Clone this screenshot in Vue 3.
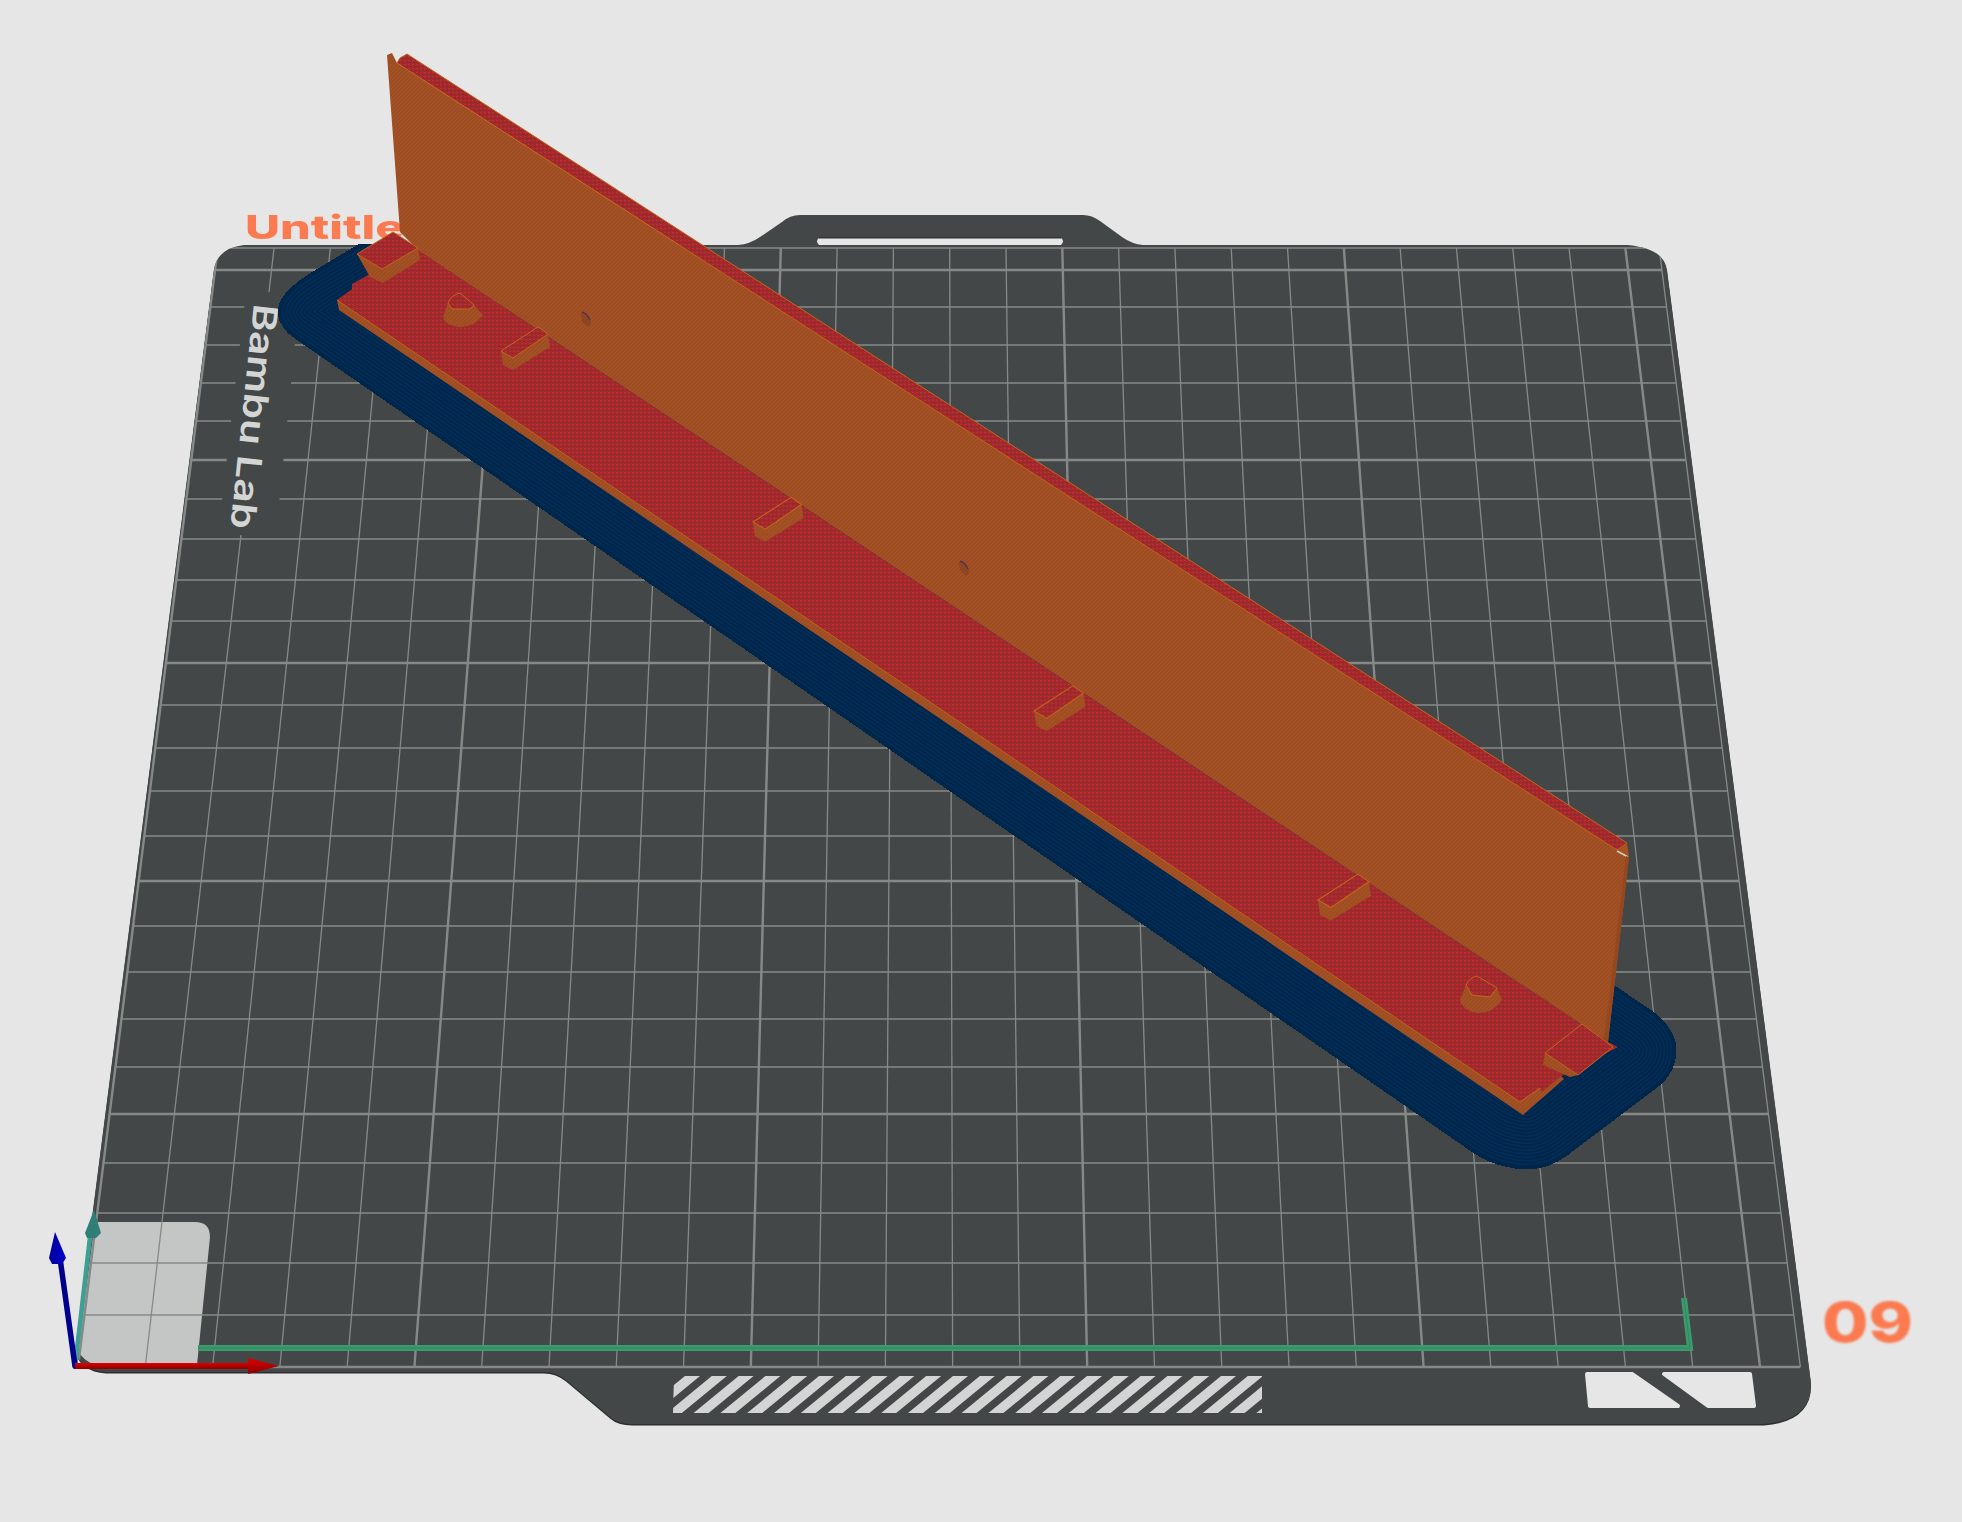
<template>
  <div class="viewport">
    <svg class="scene" width="1962" height="1522" viewBox="0 0 1962 1522">
      <defs>
        <pattern id="wallHatch" width="4" height="4" patternUnits="userSpaceOnUse">
          <rect width="4" height="4" fill="#a04e23" />
          <path d="M0 4L4 0" stroke="#a8531f" stroke-width="1" />
          <path d="M0 2L2 0M2 4L4 2" stroke="#944927" stroke-width=".6" />
        </pattern>
        <pattern id="redHatch" width="4" height="4" patternUnits="userSpaceOnUse">
          <rect width="4" height="4" fill="#a3292d" />
          <rect width="2" height="1" fill="#c22e2e" />
          <rect x="2" y="2" width="2" height="1" fill="#882b2d" />
        </pattern>
        <linearGradient id="redShaft" x1="0" y1="0" x2="0" y2="1">
          <stop offset="0" stop-color="#e00000" />
          <stop offset="1" stop-color="#8a0000" />
        </linearGradient>
        <linearGradient id="blueHead" x1="0" y1="0" x2="1" y2="0">
          <stop offset="0" stop-color="#00009c" />
          <stop offset="1" stop-color="#0000cc" />
        </linearGradient>
        <clipPath id="plateClip"><path :d="platePath" /></clipPath>
        <clipPath id="brimClip"><path :d="brimPath" /></clipPath>
        <clipPath id="stripeClip"><path d="M674 1376H1262V1413H673Z" /></clipPath>
      </defs>

      <!-- build plate -->
      <path :d="platePath" fill="#2c2f30" transform="translate(0 1.5)" />
      <path :d="platePath" fill="#434748" />

      <!-- textured corner -->
      <path
        d="M95 1222H195Q210 1222 210 1237L197 1365H95Q82 1360 78 1350Z"
        fill="#c4c6c5"
      />

      <!-- grid -->
      <g class="grid" clip-path="url(#plateClip)">
        <line
          v-for="l in vLines"
          :key="'v' + l.n"
          :x1="l.x1" y1="248" :x2="l.x2" y2="1367"
          :stroke-width="l.major ? 2.4 : 1.3"
        />
        <line
          v-for="l in hLines"
          :key="'h' + l.y"
          :x1="l.x1" :y1="l.y" :x2="l.x2" :y2="l.y"
          :stroke-width="l.major ? 2.6 : 1.6"
        />
      </g>

      <!-- plate cutouts -->
      <path d="M819 238H1061Q1065 241 1061 245H819Q815 241 819 238Z" fill="#e6e6e6" />
      <path d="M819 238H1061" stroke="#2a2d2e" stroke-width="1" />
      <path d="M1587 1374H1632L1678 1406H1590Z" class="cutout" />
      <path d="M1664 1374H1750L1754 1406H1708Z" class="cutout" />

      <!-- hazard stripes -->
      <g clip-path="url(#stripeClip)" fill="#d2d5d4">
        <path
          v-for="x in stripes"
          :key="x"
          :d="`M${x} 1413h15l45 -37h-15Z`"
        />
      </g>

      <!-- logo -->
      <path d="M246 292H300L276 535H218Z" fill="#434748" />
      <text
        class="logo"
        transform="translate(254 303) rotate(96)"
        textLength="226"
        lengthAdjust="spacingAndGlyphs"
      >Bambu Lab</text>
      <text
        class="label"
        x="245" y="239"
        textLength="190"
        lengthAdjust="spacingAndGlyphs"
      >Untitled</text>
      <text
        class="number"
        x="1822" y="1342"
        textLength="91"
        lengthAdjust="spacingAndGlyphs"
      >09</text>

      <!-- purge line -->
      <path d="M198 1348H1690L1684 1298" class="purge" />
      <path d="M198 1348H1690L1684 1298" class="purge-core" />

      <!-- brim -->
      <path :d="brimPath" fill="#00264c" />
      <g clip-path="url(#brimClip)" fill="none">
        <path
          v-for="(w, i) in brimRings"
          :key="w"
          :d="brimPath"
          :stroke="i % 2 ? '#00264a' : '#022d58'"
          :stroke-width="w"
        />
      </g>

      <!-- base of the part -->
      <path d="M337 300L339 310L1523 1115L1564 1079L1545 1060L1520 1102Z" fill="url(#wallHatch)" />
      <path
        d="M337 300L352 289V284L368 275L418 250L1608 1042L1618 1047L1560 1077L1542 1092L1540 1088L1520 1102Z"
        fill="url(#redHatch)"
      />
      <path d="M337 300L1520 1102L1540 1088" class="edge" />

      <!-- end blocks -->
      <path d="M357 254L370 277L383 283L420 260L418 248L382 269Z" fill="url(#wallHatch)" />
      <path d="M1545 1053L1543 1065L1570 1077L1578 1075Z" fill="url(#wallHatch)" />

      <!-- cones -->
      <path d="M448 303L443 317Q445 325 460 327Q476 326 483 315L474 305Z" fill="url(#wallHatch)" />
      <path d="M448 303Q451 295 460 293L474 305L470 309H452Z" fill="url(#redHatch)" class="edge" />
      <path d="M1466 985L1460 1000Q1463 1011 1478 1013Q1495 1012 1502 1000L1497 988Z" fill="url(#wallHatch)" />
      <path d="M1466 985Q1469 978 1477 976L1497 988L1490 997L1472 995Z" fill="url(#redHatch)" class="edge" />

      <!-- upright wall -->
      <path
        d="M387 55L392 53L397 63L1617 850L1629 857L1608 1042L418 250L400 232Z"
        fill="url(#wallHatch)"
      />
      <path d="M397 63L400 58L407 54L1627 843L1617 850Z" fill="url(#redHatch)" class="edge" />
      <path d="M1627 843L1629 857L1617 850Z" fill="#a8541e" />
      <path d="M1617 851L1628 857" stroke="#cfd0c8" stroke-width="1.5" />
      <path d="M1629 857L1608 1042L1604 1040L1626 856Z" fill="#94481f" />

      <ellipse cx="586" cy="319" rx="4" ry="8" transform="rotate(-25 586 319)" fill="#8f4522" />
      <path d="M582 312Q587 313 590 320" stroke="#2a2a78" stroke-width="1" fill="none" />
      <ellipse cx="964" cy="568" rx="4" ry="8" transform="rotate(-25 964 568)" fill="#8f4522" />
      <path d="M960 561Q965 562 968 569" stroke="#2a2a78" stroke-width="1" fill="none" />

      <!-- pegs and block tops sit in front of the wall -->
      <g v-for="p in pegs" :key="p.id" :transform="`translate(${p.x} ${p.y}) scale(${p.s})`">
        <path d="M0 0L2 14L12 19L49 -4L47 -17L12 7Z" fill="url(#wallHatch)" />
        <path d="M0 0L37 -24L47 -17L12 7Z" fill="url(#redHatch)" class="edge" />
      </g>
      <path d="M357 254L393 232L418 248L382 269Z" fill="url(#redHatch)" class="edge" />
      <path d="M1582 1024L1613 1047L1578 1075L1545 1053Z" fill="url(#redHatch)" class="edge" />

      <!-- axes -->
      <path d="M75 1367L90 1237" stroke="#3f9f94" stroke-width="4.5" stroke-linecap="round" />
      <path d="M94 1210L101 1233L96 1238H87L85 1233Z" fill="#2f7f77" />
      <path d="M75 1366L60 1258" stroke="#00008c" stroke-width="5.5" stroke-linecap="round" />
      <path d="M55 1232L66 1258L62 1264H52L49 1258Z" fill="url(#blueHead)" />
      <path d="M75 1363H248V1369H75Z" fill="url(#redShaft)" />
      <path d="M248 1358L279 1366L248 1374Z" fill="url(#redShaft)" />
    </svg>
  </div>
</template>

<script setup>
// plate geometry, measured off the reference at y=270 and y=1367
const topY = 270
const bottomY = 1367
const lineY = [
  248, 270, 307, 345, 383, 421, 460, 499, 539, 580, 621, 663, 705, 748, 791,
  836, 881, 926, 972, 1019, 1067, 1114, 1163, 1213, 1263, 1315, 1367,
]

function xAt(n, y) {
  const top = 215 + 56.52 * n
  const bottom = 78 + 67.28 * n
  return top + ((bottom - top) * (y - topY)) / (bottomY - topY)
}

const vLines = [...Array(26).keys(), 25.6].map((n) => ({
  n,
  x1: xAt(n, 248),
  x2: xAt(n, 1367),
  major: n % 5 === 0,
}))

const hLines = lineY.map((y, i) => ({
  y,
  x1: xAt(0, y),
  x2: xAt(25.6, y),
  major: i > 0 && (i - 1) % 5 === 0,
}))

const stripes = Array.from({ length: 24 }, (_, i) => 640 + i * 26.8)

const pegs = [
  { id: 1, x: 501, y: 351, s: 1 },
  { id: 2, x: 753, y: 522, s: 1.03 },
  { id: 3, x: 1034, y: 711, s: 1.05 },
  { id: 4, x: 1318, y: 900, s: 1.08 },
]

const brimRings = Array.from({ length: 46 }, (_, i) => 165 - i * 3.5)

const platePath =
  'M244 245H738Q750 244 760 237L782 222Q790 215 800 215H1083Q1092 215 1100 221L1122 237Q1132 244 1143 245H1627Q1664 248 1667 270L1811 1383Q1812 1420 1764 1424H632Q618 1424 610 1417L566 1380Q556 1372 544 1372H106Q80 1370 75 1350L214 269Q218 248 244 245Z'

const brimPath =
  'M360 244L313 272Q278 293 278 313Q280 328 295 338L1470 1150Q1495 1168 1527 1169Q1548 1169 1567 1155L1657 1087Q1676 1072 1676 1050Q1676 1030 1653 1012L1613 985L400 244Z'
</script>

<style scoped>
.viewport {
  width: 1962px;
  height: 1522px;
  background: #e6e6e6;
  overflow: hidden;
}

.scene {
  display: block;
}

.grid line {
  stroke: #868a87;
}

.cutout {
  fill: #e6e6e6;
  stroke: #e6e6e6;
  stroke-width: 4;
  stroke-linejoin: round;
}

.logo {
  font-family: Inter, "Liberation Sans", sans-serif;
  font-size: 34px;
  font-weight: 600;
  fill: #d2d5d4;
}

.label,
.number {
  font-family: Inter, "Liberation Sans", sans-serif;
  font-weight: 800;
  fill: #fb7a50;
}

.label {
  font-size: 33px;
  filter: blur(0.6px);
}

.number {
  font-size: 55px;
  filter: blur(1px);
}

.purge,
.purge-core {
  fill: none;
}

.purge {
  stroke: #3c9a6f;
  stroke-width: 6;
}

.purge-core {
  stroke: #2f8660;
  stroke-width: 1;
}

.edge {
  stroke: #c2661c;
  stroke-width: 1;
}

path.edge:not([fill]) {
  fill: none;
}
</style>

<style>
html,
body {
  background: #e6e6e6;
}
</style>
